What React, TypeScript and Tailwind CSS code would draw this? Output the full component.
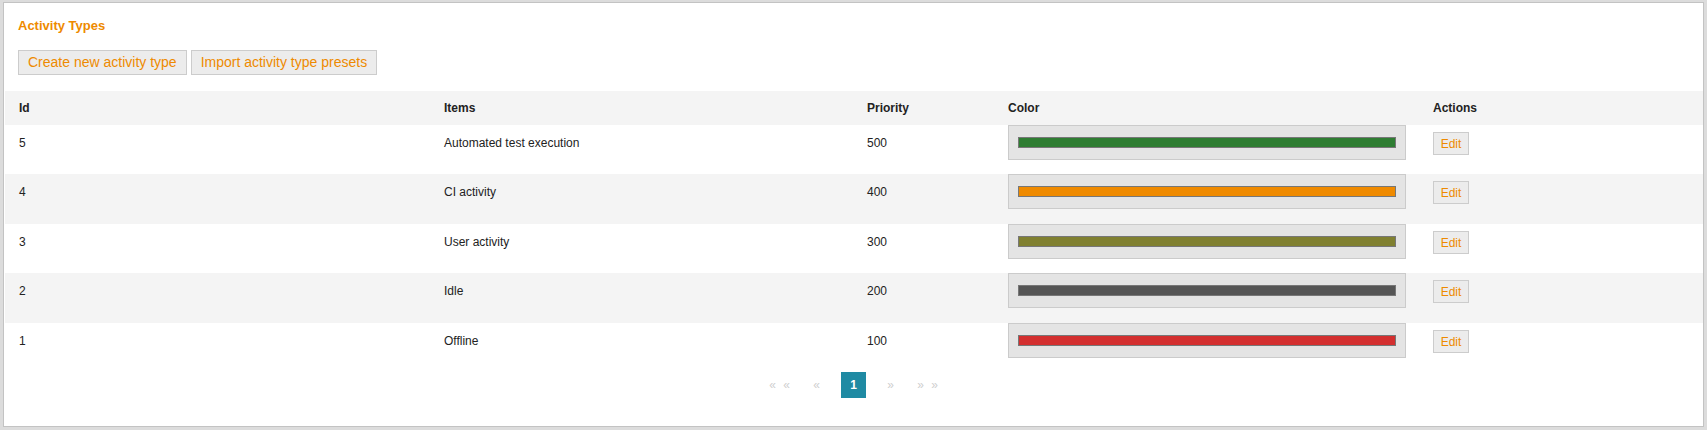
import React from 'react';

interface ActivityType {
  id: number;
  name: string;
  priority: number;
  color: string;
}

const activityTypes: ActivityType[] = [
  { id: 5, name: 'Automated test execution', priority: 500, color: '#2e7d32' },
  { id: 4, name: 'CI activity', priority: 400, color: '#ef8a00' },
  { id: 3, name: 'User activity', priority: 300, color: '#808030' },
  { id: 2, name: 'Idle', priority: 200, color: '#555555' },
  { id: 1, name: 'Offline', priority: 100, color: '#d32f2f' },
];

const cols = 'grid grid-cols-[425px_423px_141px_425px_1fr] pl-[14px]';

function ColorSwatch({ color }: { color: string }) {
  return (
    <div className="w-[398px] h-[35px] border border-[#cbcbcb] bg-[#e4e4e4] pt-[11px] px-[9px]">
      <div className="h-[11px] border border-[#777777]" style={{ backgroundColor: color }} />
    </div>
  );
}

export default function App() {
  return (
    <div className="h-[430px] bg-[#dcdcdc] px-[3px] pt-[2px] font-['Liberation_Sans',Arial,sans-serif]">
      <div className="h-[425px] border border-[#c3c3c3] bg-white">
        {/* Header */}
        <div className="pl-[14px] pt-[15px]">
          <h1 className="text-[13px] leading-[15px] font-bold text-[#ee8a00]">Activity Types</h1>
          <div className="flex gap-[4px] mt-[17px]">
            <button className="h-[25px] px-[9px] border border-[#cccccc] bg-[#ececec] text-[14px] text-[#ee8a00]">
              Create new activity type
            </button>
            <button className="h-[25px] px-[9px] border border-[#cccccc] bg-[#ececec] text-[14px] text-[#ee8a00]">
              Import activity type presets
            </button>
          </div>
        </div>

        {/* Table */}
        <div className="mt-[16px] ml-[1px] text-[12px] text-[#222]">
          <div className={`${cols} h-[34px] items-center bg-[#f4f4f4] font-bold`}>
            <div>Id</div>
            <div>Items</div>
            <div>Priority</div>
            <div>Color</div>
            <div>Actions</div>
          </div>
          {activityTypes.map((t, i) => (
            <div
              key={t.id}
              className={`${cols} items-start ${i % 2 === 1 ? 'bg-[#f4f4f4] h-[50px]' : 'bg-white h-[49px]'}`}
            >
              <div className="mt-[9px] leading-[18px]">{t.id}</div>
              <div className="mt-[9px] leading-[18px]">{t.name}</div>
              <div className="mt-[9px] leading-[18px]">{t.priority}</div>
              <ColorSwatch color={t.color} />
              <div>
                <button className="mt-[7px] w-[36px] h-[23px] border border-[#cccccc] bg-[#ececec] text-[12px] text-[#ee8a00]">
                  Edit
                </button>
              </div>
            </div>
          ))}
        </div>

        {/* Pagination */}
        <div className="flex justify-center items-center h-[26px] text-[12px] text-[#cfcfcf]">
          <span className="w-[7px] text-center">«</span>
          <span className="w-[7px] ml-[7px] text-center">«</span>
          <span className="w-[7px] ml-[23px] text-center">«</span>
          <span className="w-[25px] h-[26px] ml-[21px] flex items-center justify-center bg-[#1f8aa3] text-white font-bold">
            1
          </span>
          <span className="w-[7px] ml-[21px] text-center">»</span>
          <span className="w-[7px] ml-[23px] text-center">»</span>
          <span className="w-[7px] ml-[7px] text-center">»</span>
        </div>
      </div>
    </div>
  );
}
